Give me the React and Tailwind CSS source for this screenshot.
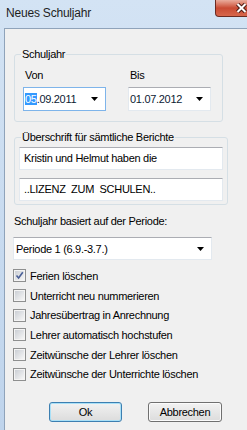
import React from 'react';

const Arrow = () => (
  <svg width="7" height="4" viewBox="0 0 7 4" className="shrink-0">
    <path d="M0 0h7L3.5 4z" fill="#000" />
  </svg>
);

const DatePicker = ({ value, focused }) => (
  <div
    className={`flex h-[24px] w-[83px] items-center justify-between bg-white pl-[1px] pr-[7px] border ${
      focused ? 'border-[#7eb4ea]' : 'border-[#e3e9ef] border-t-[#abadb3]'
    }`}
  >
    <span className="leading-[16px] text-[#0c1a33]">
      {focused ? (
        <>
          <span className="bg-[#3399ff] text-white">05</span>.09.2011
        </>
      ) : (
        value
      )}
    </span>
    <Arrow />
  </div>
);

const TextBox = ({ children }) => (
  <div className="flex h-[23px] w-[204px] items-center bg-white border border-[#e3e9ef] border-t-[#abadb3] pl-[4px]">
    {children}
  </div>
);

const CheckBox = ({ checked, label }) => (
  <div className="flex h-[19.7px] items-center gap-[4px]">
    <div className="flex h-[13px] w-[13px] items-center justify-center border border-[#8e8f8f] bg-white">
      <div className="flex h-[11px] w-[11px] items-center justify-center border border-[#f4f4f4] bg-gradient-to-br from-[#cbcfd5] to-[#f6f6f6]">
        {checked && (
          <svg width="9" height="9" viewBox="0 0 9 9">
            <path d="M1.5 4.5 L3.6 7 L7.8 1.2" fill="none" stroke="#4a5f97" strokeWidth="1.6" />
          </svg>
        )}
      </div>
    </div>
    <span className="leading-[16px]">{label}</span>
  </div>
);

export default function App() {
  return (
    <div className="relative h-[430px] w-[247px] overflow-hidden bg-gradient-to-b from-[#d3e3f4] to-[#bfd4ec] font-['Liberation_Sans',Arial,sans-serif] text-[11px] tracking-[-0.3px] text-black">
      {/* title bar */}
      <div className="flex h-[28px] items-start justify-between">
        <span className="pl-[6px] pt-[5px] text-[12px] leading-[16px] tracking-[-0.2px] text-[#1e1e1e]">Neues Schuljahr</span>
        <div className="-mr-[20px] flex h-[17px] w-[52px] items-center justify-center rounded-b-[4px] border border-t-0 border-[#6b2a21] bg-gradient-to-b from-[#e9ab9c] via-[#c94a33] to-[#d7674c]">
          <svg width="13" height="10" viewBox="0 0 13 10">
            <path d="M2.5 1 L10.5 9 M10.5 1 L2.5 9" stroke="#4a1a14" strokeWidth="4" />
            <path d="M2.5 1 L10.5 9 M10.5 1 L2.5 9" stroke="#fff" strokeWidth="2" />
          </svg>
        </div>
      </div>

      {/* dialog body */}
      <div className="ml-[4px] h-[402px] border-l border-t border-[#8fa3ba] bg-[#f0f0f0] pl-[9px] pt-[19px]">
        <fieldset className="w-[209px] rounded-[3px] border border-[#d5dfe5] pb-[10px] pl-[8px]">
          <legend className="-ml-[2px] px-[1px] leading-[12px]">Schuljahr</legend>
          <div className="mt-[7px] flex gap-[22px]">
            <div className="flex w-[83px] flex-col">
              <span className="pl-[2px] leading-[16px]">Von</span>
              <div className="mt-[4px]">
                <DatePicker value="05.09.2011" focused />
              </div>
            </div>
            <div className="flex w-[83px] flex-col">
              <span className="pl-[2px] leading-[16px]">Bis</span>
              <div className="mt-[4px]">
                <DatePicker value="01.07.2012" />
              </div>
            </div>
          </div>
        </fieldset>

        <fieldset className="mt-[9px] w-[214px] rounded-[3px] border border-[#d5dfe5] pb-[3px] pl-[4px]">
          <legend className="ml-[2px] px-[1px] leading-[12px]">Überschrift für sämtliche Berichte</legend>
          <div className="mt-[4px] flex flex-col gap-[8px]">
            <TextBox>Kristin und Helmut haben die</TextBox>
            <TextBox>..LIZENZ&nbsp; ZUM&nbsp; SCHULEN..</TextBox>
          </div>
        </fieldset>

        <div className="mt-[8px] leading-[16px]">Schuljahr basiert auf der Periode:</div>
        <div className="-ml-[1px] mt-[8px] flex h-[23px] w-[199px] items-center justify-between bg-white border border-[#e3e9ef] border-t-[#abadb3] pl-[2px] pr-[7px]">
          <span className="leading-[16px]">Periode 1 (6.9.-3.7.)</span>
          <Arrow />
        </div>

        <div className="-ml-[1px] mt-[6px] flex flex-col">
          <CheckBox checked label="Ferien löschen" />
          <CheckBox label="Unterricht neu nummerieren" />
          <CheckBox label="Jahresübertrag in Anrechnung" />
          <CheckBox label="Lehrer automatisch hochstufen" />
          <CheckBox label="Zeitwünsche der Lehrer löschen" />
          <CheckBox label="Zeitwünsche der Unterrichte löschen" />
        </div>

        <div className="mt-[18px] flex gap-[26px] pl-[35px]">
          <button className="h-[20px] w-[73px] rounded-[3px] border border-[#3c7fb1] bg-gradient-to-b from-[#f2f2f2] to-[#dcdcdc] shadow-[inset_0_0_0_1px_#a9e0f7] leading-[16px]">
            Ok
          </button>
          <button className="h-[20px] w-[74px] rounded-[3px] border border-[#707070] bg-gradient-to-b from-[#f2f2f2] to-[#dcdcdc] shadow-[inset_0_0_0_1px_#fbfbfb] leading-[16px]">
            Abbrechen
          </button>
        </div>
      </div>
    </div>
  );
}
